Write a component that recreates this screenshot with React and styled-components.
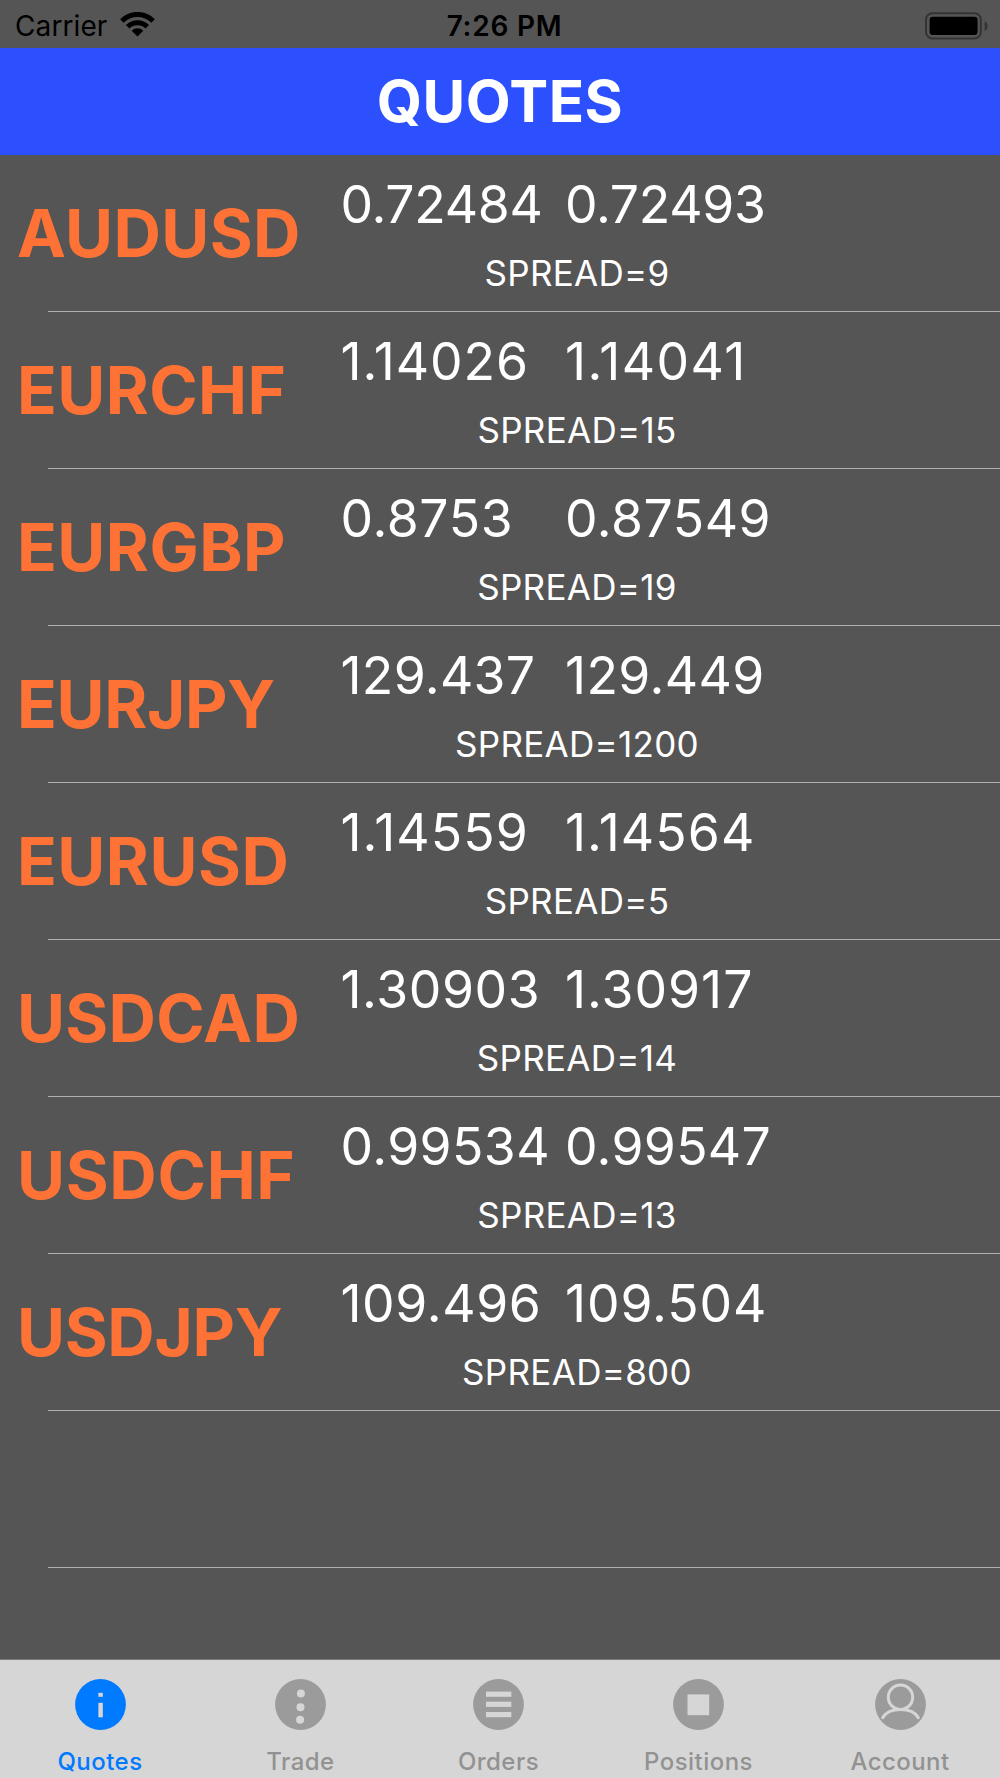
import React from "react";
import styled, { createGlobalStyle } from "styled-components";

const GlobalStyle = createGlobalStyle`
  * { box-sizing: border-box; }
  html, body { margin: 0; padding: 0; background: #555; }
  body { font-family: Inter, "Liberation Sans", sans-serif; }
`;

const Screen = styled.div`
  width: 1000px;
  height: 1778px;
  display: flex;
  flex-direction: column;
  background: #555;
  overflow: hidden;
`;

const StatusBar = styled.header`
  height: 48px;
  flex: none;
  display: grid;
  grid-template-columns: 1fr auto 1fr;
  align-items: center;
  padding: 2px 12px 0 15px;
  color: #000;
`;

const Carrier = styled.div`
  display: flex;
  align-items: center;
  gap: 13px;
  font-size: 28px;
  line-height: 46px;
  letter-spacing: 0.1px;
  svg { margin-top: -2px; }
`;

const Time = styled.div`
  padding: 1px 0 0 6px;
  font-size: 28px;
  line-height: 46px;
  font-weight: 600;
  letter-spacing: 0.75px;
`;

const BatterySlot = styled.div`
  display: flex;
  justify-content: flex-end;
`;

const TitleBar = styled.div`
  height: 107px;
  flex: none;
  display: flex;
  align-items: center;
  justify-content: center;
  padding-bottom: 2px;
  background: #2d50ff;
`;

const Title = styled.h1`
  margin: 0;
  font-size: 58.3px;
  line-height: 70px;
  font-weight: 700;
  color: #fff;
  letter-spacing: 0.5px;
`;

const List = styled.main`
  flex: 1;
  min-height: 0;
  overflow: hidden;
`;

const Row = styled.div`
  height: 157px;
  display: grid;
  grid-template-columns: 340px 474px;
`;

const Divider = styled.div`
  height: 1px;
  margin: -1px 0 0 48px;
  background: #b0b0b0;
`;

const Symbol = styled.div`
  padding: 38px 0 0 17px;
  font-size: 65.6px;
  line-height: 80px;
  font-weight: 700;
  color: #ff7235;
  letter-spacing: ${(p) => p.$track}px;
  white-space: nowrap;
`;

const Detail = styled.div`
  padding-top: 18px;
  color: #fff;
`;

const Prices = styled.div`
  display: grid;
  grid-template-columns: 224.5px 1fr;
`;

const Price = styled.div`
  padding-left: 0.5px;
  font-size: 51.7px;
  line-height: 62px;
  letter-spacing: ${(p) => p.$track}px;
  white-space: nowrap;
`;

const Spread = styled.div`
  margin-top: 16px;
  font-size: 35px;
  line-height: 44px;
  text-align: center;
  letter-spacing: 0.3px;
`;

const TabBar = styled.nav`
  height: 119px;
  flex: none;
  display: grid;
  grid-template-columns: 200px 201px 195px 205px 198px;
  padding-top: 19px;
  background: #d6d6d6;
  border-top: 1px solid #7c7c7c;
`;

const Tab = styled.div`
  display: flex;
  flex-direction: column;
  align-items: center;
  color: ${(p) => (p.$active ? "#007aff" : "#929292")};
  svg { color: ${(p) => (p.$active ? "#007aff" : "#9b9b9b")}; }
`;

const TabLabel = styled.span`
  margin-top: 17px;
  font-size: 24px;
  line-height: 30px;
  font-weight: 500;
  letter-spacing: 0.45px;
`;

const quotes = [
  { symbol: "AUDUSD", bid: "0.72484", ask: "0.72493", spread: 9, track: [0.4, -0.3, -0.3] },
  { symbol: "EURCHF", bid: "1.14026", ask: "1.14041", spread: 15, track: [0.4, 0.9, 1.4] },
  { symbol: "EURGBP", bid: "0.8753", ask: "0.87549", spread: 19, track: [0.5, 0.6, 0.5] },
  { symbol: "EURJPY", bid: "129.437", ask: "129.449", spread: 1200, track: [-0.3, 0.3, 0.4] },
  { symbol: "EURUSD", bid: "1.14559", ask: "1.14564", spread: 5, track: [0.5, 1.1, 1.1] },
  { symbol: "USDCAD", bid: "1.30903", ask: "1.30917", spread: 14, track: [0.3, 0.6, 1] },
  { symbol: "USDCHF", bid: "0.99534", ask: "0.99547", spread: 13, track: [0.7, 0.4, 0.3] },
  { symbol: "USDJPY", bid: "109.496", ask: "109.504", spread: 800, track: [-0.3, 0.6, 0.9] },
];

const CUT = "#d6d6d6";

const glyphs = {
  Quotes: (
    <>
      <rect x="23.4" y="13.8" width="4.4" height="4" fill={CUT} />
      <rect x="23.4" y="23.8" width="4.4" height="14.5" fill={CUT} />
    </>
  ),
  Trade: (
    <>
      <circle cx="25.9" cy="14.6" r="4" fill={CUT} />
      <circle cx="25.5" cy="28.2" r="4" fill={CUT} />
      <circle cx="25.1" cy="40.8" r="4" fill={CUT} />
    </>
  ),
  Orders: (
    <>
      <rect x="13" y="12.6" width="25.3" height="5.2" fill={CUT} />
      <rect x="13" y="22.7" width="25.3" height="5.2" fill={CUT} />
      <rect x="13" y="33" width="25.3" height="5.2" fill={CUT} />
    </>
  ),
  Positions: <rect x="14.5" y="15.4" width="21.7" height="20.8" fill={CUT} />,
  Account: (
    <>
      <circle cx="25.5" cy="18.3" r="12.2" fill="none" stroke={CUT} strokeWidth="3" />
      <path d="M7.8 38.5C11 33 17 30.5 25.5 30.5S40 33 43.2 38.5" fill="none" stroke={CUT} strokeWidth="3.2" strokeLinecap="round" />
    </>
  ),
};

function TabIcon({ name }) {
  return (
    <svg width="51" height="51" viewBox="0 0 51 51">
      <circle cx="25.5" cy="25.5" r="25.4" fill="currentColor" />
      {glyphs[name]}
    </svg>
  );
}

function Wifi() {
  return (
    <svg width="35" height="25" viewBox="0 0 35 25" fill="none" stroke="#000">
      <path d="M1.9 8.9A22 22 0 0 1 33.1 8.9" strokeWidth="5" />
      <path d="M7.7 14.7A13.9 13.9 0 0 1 27.3 14.7" strokeWidth="5" />
      <path d="M11.7 18.7A8.2 8.2 0 0 1 23.3 18.7L17.5 24.5Z" fill="#000" stroke="none" />
    </svg>
  );
}

function Battery() {
  return (
    <svg width="64" height="28" viewBox="0 0 64 28">
      <rect x="2" y="1.2" width="54.8" height="25.2" rx="6.4" fill="none" stroke="#343434" strokeWidth="2" />
      <rect x="5.6" y="4.8" width="48" height="18.2" rx="3.2" fill="#000" />
      <path d="M60.6 9C64.6 11 64.6 17 60.6 19Z" fill="#343434" />
    </svg>
  );
}

function QuoteRow({ quote: { symbol, bid, ask, spread, track } }) {
  return (
    <>
      <Row>
        <Symbol $track={track[0]}>{symbol}</Symbol>
        <Detail>
          <Prices>
            <Price $track={track[1]}>{bid}</Price>
            <Price $track={track[2]}>{ask}</Price>
          </Prices>
          <Spread>SPREAD={spread}</Spread>
        </Detail>
      </Row>
      <Divider />
    </>
  );
}

export default function App() {
  return (
    <Screen>
      <GlobalStyle />
      <StatusBar>
        <Carrier>Carrier<Wifi /></Carrier>
        <Time>7:26 PM</Time>
        <BatterySlot><Battery /></BatterySlot>
      </StatusBar>
      <TitleBar><Title>QUOTES</Title></TitleBar>
      <List>
        {quotes.map((q) => <QuoteRow key={q.symbol} quote={q} />)}
        <Row />
        <Divider />
      </List>
      <TabBar>
        {Object.keys(glyphs).map((name) => (
          <Tab key={name} $active={name === "Quotes"}>
            <TabIcon name={name} />
            <TabLabel>{name}</TabLabel>
          </Tab>
        ))}
      </TabBar>
    </Screen>
  );
}
